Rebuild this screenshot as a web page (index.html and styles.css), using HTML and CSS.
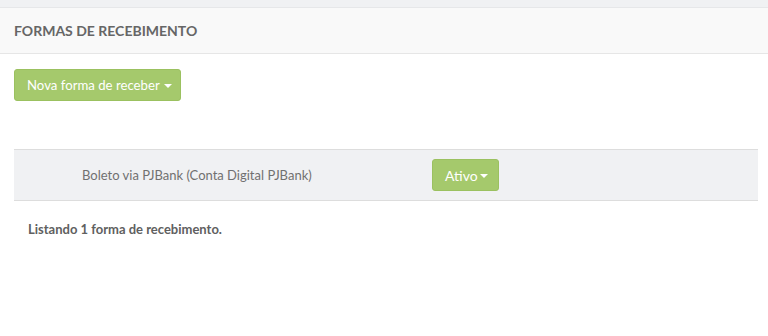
FILE: index.html
```html
<!DOCTYPE html>
<html lang="pt">
<head>
<meta charset="utf-8">
<link rel="stylesheet" href="styles.css">
</head>
<body>
<div class="topstrip"></div>
<div class="panel">
  <div class="panel-head">Formas de recebimento</div>
  <div class="panel-body">
    <button class="btn btn-new">Nova forma de receber<span class="caret"></span></button>
    <div class="table">
      <div class="row">
        <div class="cell-empty"></div>
        <div class="cell-name">Boleto via PJBank (Conta Digital PJBank)</div>
        <div class="cell-status"><button class="btn btn-status">Ativo<span class="caret"></span></button></div>
      </div>
    </div>
    <p class="listing">Listando 1 forma de recebimento.</p>
  </div>
</div>
</body>
</html>
```
FILE: styles.css
```css
* { box-sizing: border-box; }
html, body { margin: 0; padding: 0; background: #fff; }
body { font-family: Lato, "Open Sans", sans-serif; color: #666; width: 768px; height: 336px; overflow: hidden; }
.topstrip { height: 8px; background: #f0f1f3; border-bottom: 1px solid #e6e7e9; }
.panel-head {
  height: 46px;
  background: #f9f9f9;
  border-bottom: 1px solid #e6e6e6;
  padding: 0 14px;
  display: flex;
  align-items: center;
  font-size: 14px;
  font-weight: bold;
  text-transform: uppercase;
  color: #666;
}
.panel-body {
  padding: 15px 10px 0 14px;
  display: flex;
  flex-direction: column;
  align-items: flex-start;
}
.btn {
  font-family: Lato, "Open Sans", sans-serif;
  font-size: 14px;
  color: #fff;
  background: #a5c96c;
  border: 1px solid #9bc160;
  border-radius: 3px;
  height: 32px;
  display: flex;
  align-items: center;
  white-space: nowrap;
  cursor: pointer;
}
.btn-new { width: 167px; padding: 0 12px; font-size: 13.2px; }
.caret {
  display: inline-block;
  width: 0; height: 0;
  border-left: 4px solid transparent;
  border-right: 4px solid transparent;
  border-top: 4px solid #fff;
  margin-left: 2px;
  margin-top: 2px;
}
.btn-new .caret { margin-left: 4px; }
.table { margin-top: 48px; }
.row {
  display: grid;
  grid-template-columns: 68px 350px auto;
  align-items: center;
  background: #f0f1f3;
  border-top: 1px solid #dddddd;
  border-bottom: 1px solid #dddddd;
  padding: 9px 0;
  width: 744px;
}
.cell-name { font-size: 13px; color: #707070; }
.btn-status { width: 67px; padding: 0 0 0 12px; }
.listing { margin: 20px 0 0 14px; font-size: 13px; font-weight: bold; color: #606060; }
```
